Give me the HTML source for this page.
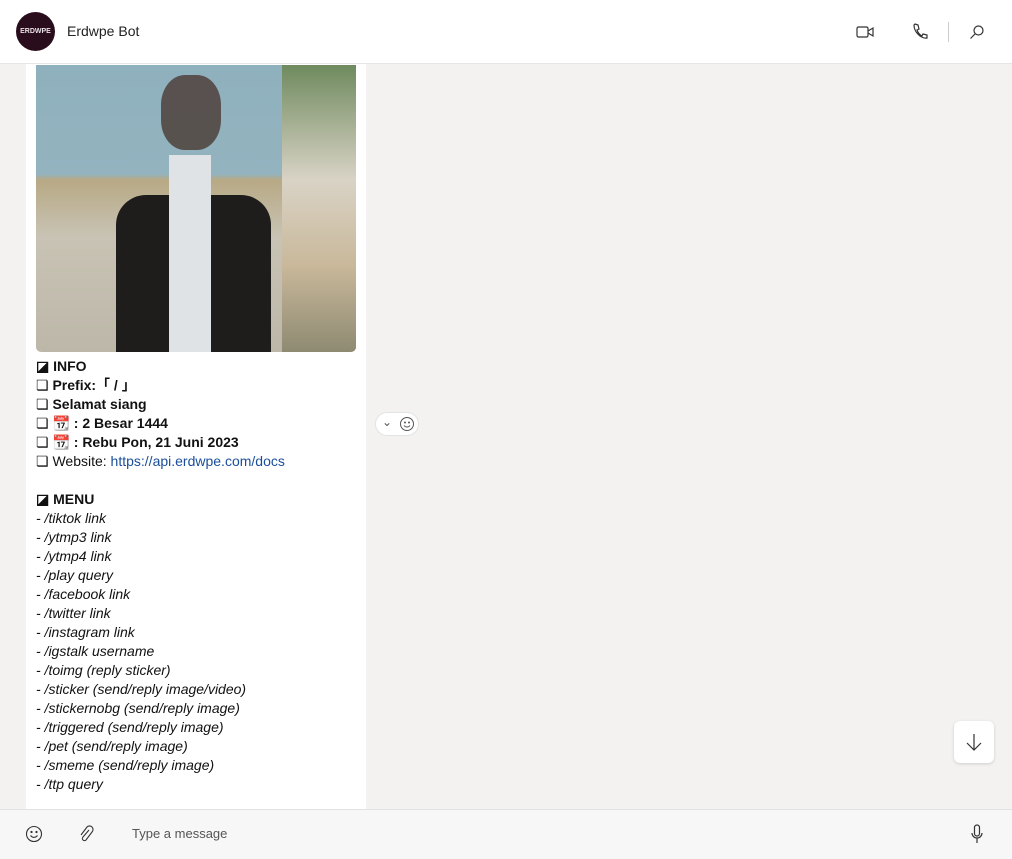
<!DOCTYPE html>
<html><head><meta charset="utf-8"><style>
*{margin:0;padding:0;box-sizing:border-box}
body{width:1012px;height:859px;overflow:hidden;background:#f3f2f0;font-family:"Liberation Sans","Noto Sans CJK JP",sans-serif;position:relative;color:#111}
.hdr{position:absolute;left:0;top:0;width:1012px;height:64px;background:#fff;border-bottom:1px solid #e6e6e6}
.av{position:absolute;left:16px;top:12px;width:39px;height:39px;border-radius:50%;background:#2a0d1c;color:#e9e1e6;font-size:7px;font-weight:bold;text-align:center;line-height:39px}
.name{position:absolute;left:67px;top:23px;font-size:14px;color:#222}
.bub{position:absolute;left:26px;top:64px;width:340px;height:745px;background:#fff}
.img{position:absolute;left:36px;top:65px;width:320px;height:287px;border-radius:0 0 5px 5px;overflow:hidden;background:linear-gradient(180deg,#8fb0bd 0%,#93b3bf 38%,#b8a985 40%,#c8c3b4 60%,#bcb7a8 100%)}
.txt{position:absolute;left:36px;top:357px;font-size:14px;line-height:19px;color:#111}
.txt b{font-weight:bold}
.txt i{font-style:italic}
a{color:#1a4e9a;text-decoration:none}
.foot{position:absolute;left:0;top:809px;width:1012px;height:50px;background:#f7f7f7;border-top:1px solid #e2e2e2}
.ph{position:absolute;left:132px;top:16px;font-size:13px;color:#555}
.down{position:absolute;left:954px;top:721px;width:40px;height:42px;background:#fff;border-radius:6px;box-shadow:0 1px 3px rgba(0,0,0,.15)}
.react{position:absolute;left:375px;top:412px;width:44px;height:24px;background:#fff;border-radius:12px;border:1px solid #e3e3e3}
</style></head><body>
<div class="hdr">
<div class="av">ERDWPE</div>
<div class="name">Erdwpe Bot</div>
<svg style="position:absolute;left:856px;top:24px" width="18" height="16" viewBox="0 0 18 16" fill="none" stroke="#333" stroke-width="1.2"><rect x="1" y="3" width="11" height="10" rx="1.5"/><path d="M12 7l5-3v8l-5-3"/></svg>
<svg style="position:absolute;left:912px;top:23px" width="16" height="17" viewBox="0 0 16 17" fill="none" stroke="#333" stroke-width="1.2"><path d="M3 1l3 1 1 4-2 1c1 3 3 5 5 6l1-2 4 1 0 3c-6 1-13-6-13-13z"/></svg>
<div style="position:absolute;left:948px;top:22px;width:1px;height:20px;background:#ccc"></div>
<svg style="position:absolute;left:969px;top:24px" width="16" height="16" viewBox="0 0 16 16" fill="none" stroke="#333" stroke-width="1.2"><circle cx="9.5" cy="6.5" r="4.5"/><path d="M6 10l-4.5 4.5"/></svg>
</div>
<div class="bub"></div>
<div class="img">
<div style="position:absolute;left:246px;top:0;width:74px;height:287px;background:linear-gradient(180deg,#6f8a5e,#d9d3c6 40%,#c9b89a 70%,#8e8a72)"></div>
<div style="position:absolute;left:80px;top:130px;width:155px;height:157px;background:#1f1d1c;border-radius:30px 30px 0 0"></div>
<div style="position:absolute;left:133px;top:90px;width:42px;height:197px;background:#dfe3e6"></div>
<div style="position:absolute;left:125px;top:10px;width:60px;height:75px;background:#4a3a33;border-radius:40%;opacity:.8"></div>
</div>
<div class="txt">
<b>◪ INFO</b><br>
❏ <b>Prefix:「 / 」</b><br>
❏ <b>Selamat siang</b><br>
❏ 📆 <b>: 2 Besar 1444</b><br>
❏ 📆 <b>: Rebu Pon, 21 Juni 2023</b><br>
❏ Website: <a>https://api.erdwpe.com/docs</a><br>
<br>
<b>◪ MENU</b><br>
<i>- /tiktok link<br>- /ytmp3 link<br>- /ytmp4 link<br>- /play query<br>- /facebook link<br>- /twitter link<br>- /instagram link<br>- /igstalk username<br>- /toimg (reply sticker)<br>- /sticker (send/reply image/video)<br>- /stickernobg (send/reply image)<br>- /triggered (send/reply image)<br>- /pet (send/reply image)<br>- /smeme (send/reply image)<br>- /ttp query</i>
</div>
<div class="react"><span style="position:absolute;left:6px;top:2px;font-size:12px;color:#555">⌄</span><svg style="position:absolute;left:23px;top:3px" width="16" height="16" viewBox="0 0 16 16" fill="none" stroke="#555"><circle cx="8" cy="8" r="6.5"/><path d="M5 9.5c1.5 2 4.5 2 6 0"/><circle cx="6" cy="6.5" r=".5"/><circle cx="10" cy="6.5" r=".5"/></svg></div>
<div class="down"><svg style="position:absolute;left:12px;top:12px" width="16" height="18" viewBox="0 0 16 18" fill="none" stroke="#333" stroke-width="1.2"><path d="M8 1v16M1 10l7 7 7-7"/></svg></div>
<div class="foot">
<svg style="position:absolute;left:25px;top:15px" width="18" height="18" viewBox="0 0 18 18" fill="none" stroke="#333" stroke-width="1.1"><circle cx="9" cy="9" r="7.5"/><path d="M5.5 10.5c2 2.5 5 2.5 7 0"/><circle cx="6.5" cy="7" r=".6"/><circle cx="11.5" cy="7" r=".6"/></svg>
<svg style="position:absolute;left:78px;top:15px" width="16" height="18" viewBox="0 0 16 18" fill="none" stroke="#333" stroke-width="1.1"><path d="M11 5l-6 7a2 2 0 003 3l6-8a3.5 3.5 0 00-5-5l-6 8"/></svg>
<div class="ph">Type a message</div>
<svg style="position:absolute;left:970px;top:14px" width="14" height="20" viewBox="0 0 14 20" fill="none" stroke="#333" stroke-width="1.2"><rect x="4.5" y="1" width="5" height="11" rx="2.5"/><path d="M2 9a5 5 0 0010 0M7 14v5"/></svg>
</div>
</body></html>
